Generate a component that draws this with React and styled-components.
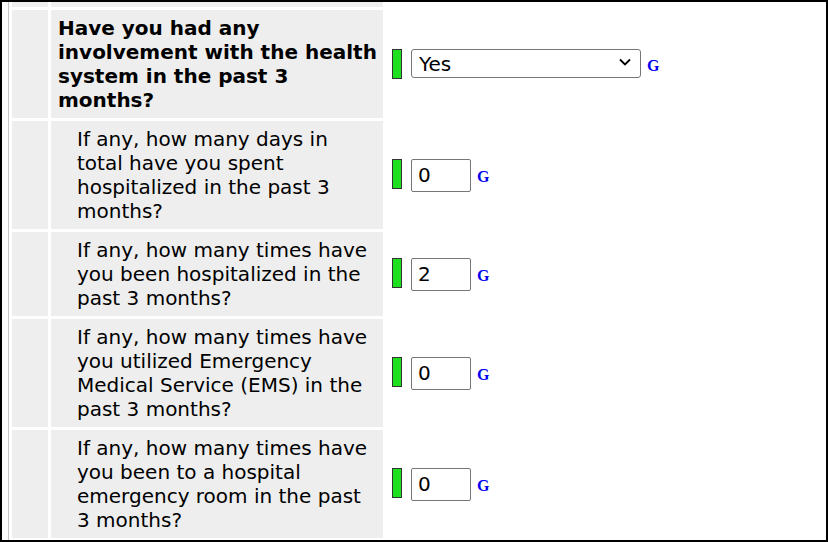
import React from "react";
import styled, { createGlobalStyle } from "styled-components";

const Global = createGlobalStyle`
  html, body { margin: 0; padding: 0; background: #fff; }
  body { font-family: "DejaVu Sans", Verdana, sans-serif; color: #000; }
`;

const Frame = styled.div`
  width: 828px;
  height: 542px;
  box-sizing: border-box;
  border: 2px solid #000;
  overflow: hidden;
  background: #fff;
`;

const Inner = styled.div`
  margin-left: 6px;
  height: 100%;
  border-left: 1px solid #c8c8c8;
  padding-left: 3px;
  display: flex;
  flex-direction: column;
  gap: 3px;
`;

const Row = styled.div`
  display: grid;
  grid-template-columns: 36px 332px 1fr;
  column-gap: 3px;
  height: ${(p) => (p.$stub ? "5px" : "auto")};
`;

const Spacer = styled.div`
  background: #eeeeee;
`;

const Label = styled.div`
  background: #eeeeee;
  padding: 6px 4px 6px ${(p) => (p.$sub ? "26px" : "7px")};
  font-size: 20px;
  line-height: 24px;
  font-weight: ${(p) => (p.$bold ? 700 : 400)};
`;

const Answer = styled.div`
  display: flex;
  align-items: center;
  padding-left: 6px;
`;

const Group = styled.div`
  display: flex;
  align-items: flex-start;
`;

const Indicator = styled.span`
  display: block;
  width: 10px;
  height: 30px;
  box-sizing: border-box;
  border: 1px solid #333;
  background: #1fe01f;
  margin-right: 9px;
`;

const SelectWrap = styled.div`
  position: relative;
  width: 230px;
  height: 29px;
`;

const Select = styled.select`
  appearance: none;
  -webkit-appearance: none;
  width: 100%;
  height: 100%;
  box-sizing: border-box;
  border: 1px solid #767676;
  border-radius: 3px;
  background: #fff;
  padding: 0 0 0 7px;
  font-family: "DejaVu Sans", Verdana, sans-serif;
  font-size: 20px;
  color: #000;
  outline: none;
`;

const Chevron = styled.svg`
  position: absolute;
  right: 10px;
  top: 9px;
  width: 12px;
  height: 8px;
  pointer-events: none;
`;

const Input = styled.input`
  width: 60px;
  height: 33px;
  box-sizing: border-box;
  border: 1px solid #767676;
  border-radius: 2px;
  padding: 0 0 0 6px;
  font-family: "DejaVu Sans", Verdana, sans-serif;
  font-size: 20px;
  color: #000;
  background: #fff;
  outline: none;
`;

const GLink = styled.span`
  font-family: "Liberation Serif", "Times New Roman", serif;
  font-weight: 700;
  font-size: 16px;
  color: #0000ee;
  margin-left: 6px;
  align-self: center;
  margin-top: 3px;
`;

const questions = [
  { text: "If any, how many days in total have you spent hospitalized in the past 3 months?", value: "0" },
  { text: "If any, how many times have you been hospitalized in the past 3 months?", value: "2" },
  { text: "If any, how many times have you utilized Emergency Medical Service (EMS) in the past 3 months?", value: "0" },
  { text: "If any, how many times have you been to a hospital emergency room in the past 3 months?", value: "0" },
];

export default function App() {
  return (
    <>
      <Global />
      <Frame>
        <Inner>
          <Row $stub>
            <Spacer />
            <Spacer />
            <div />
          </Row>
          <Row>
            <Spacer />
            <Label $bold>Have you had any involvement with the health system in the past 3 months?</Label>
            <Answer>
              <Group>
                <Indicator />
                <SelectWrap>
                  <Select defaultValue="Yes">
                    <option value="Yes">Yes</option>
                    <option value="No">No</option>
                  </Select>
                  <Chevron viewBox="0 0 12 8">
                    <path d="M1 1.5 L6 6.5 L11 1.5" fill="none" stroke="#000" strokeWidth="1.8" />
                  </Chevron>
                </SelectWrap>
              </Group>
              <GLink>G</GLink>
            </Answer>
          </Row>
          {questions.map((q, i) => (
            <Row key={i}>
              <Spacer />
              <Label $sub>{q.text}</Label>
              <Answer>
                <Group>
                  <Indicator />
                  <Input defaultValue={q.value} />
                </Group>
                <GLink>G</GLink>
              </Answer>
            </Row>
          ))}
        </Inner>
      </Frame>
    </>
  );
}
